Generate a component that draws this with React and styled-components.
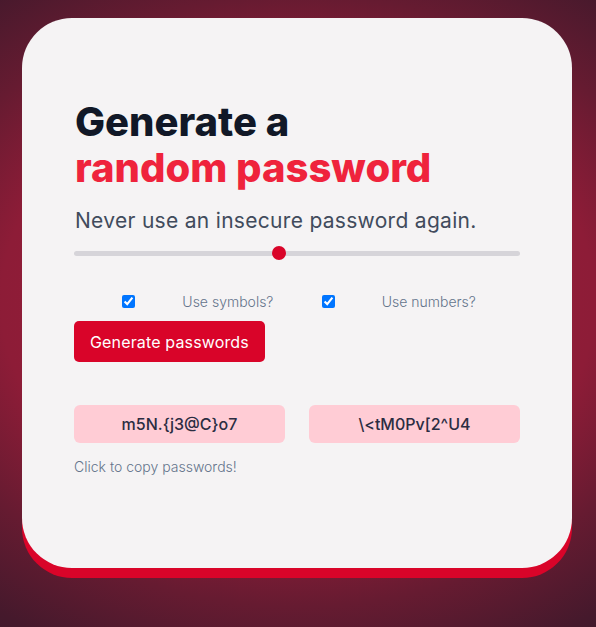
import React, { useState } from "react";
import styled, { createGlobalStyle } from "styled-components";

const Global = createGlobalStyle`
  html, body { margin: 0; padding: 0; }
  body {
    min-height: 100vh;
    font-family: Inter, "Noto Sans", sans-serif;
    background: radial-gradient(ellipse 560px 430px at 50% 48%, #a21d3b 0%, #8d1c37 53%, #661b31 71%, #45192c 90%, #3a1a2b 100%);
  }
`;

const Page = styled.div`
  display: flex;
  justify-content: center;
  padding: 18px 2px 0 0;
  min-height: 100vh;
  box-sizing: border-box;
`;

const Card = styled.main`
  width: 550px;
  height: 550px;
  box-sizing: border-box;
  background: #f5f3f4;
  border-radius: 50px;
  box-shadow: 0 10px 0 #d90429;
  padding: 81px 52px 0 52px;
`;

const Title = styled.h1`
  margin: 0;
  padding-left: 1px;
  font-size: 40px;
  line-height: 46px;
  font-weight: 800;
  letter-spacing: 0;
  color: #111827;
`;

const Accent = styled.span`
  display: block;
  color: #ef233c;
`;

const Subtitle = styled.p`
  margin: 16px 0 0;
  padding-left: 1px;
  font-size: 21px;
  line-height: 28px;
  font-weight: 400;
  letter-spacing: 0.3px;
  color: #414b5c;
`;

const Range = styled.input`
  display: block;
  width: 100%;
  height: 14px;
  margin: 11px 0 0;
  background: transparent;
  -webkit-appearance: none;
  appearance: none;
  &::-webkit-slider-runnable-track {
    height: 5px;
    background: #d6d4d9;
    border-radius: 3px;
  }
  &::-webkit-slider-thumb {
    -webkit-appearance: none;
    width: 14px;
    height: 14px;
    border-radius: 50%;
    background: #d90429;
    border: none;
    margin-top: -4.5px;
  }
`;

const Options = styled.div`
  display: flex;
  align-items: center;
  justify-content: space-evenly;
  margin-top: 32px;
`;

const Check = styled.input`
  margin: 3px 3px 3px 4px;
  width: 13px;
  height: 13px;
`;

const OptionLabel = styled.label`
  font-size: 14px;
  line-height: 17px;
  font-weight: 300;
  color: #64748b;
`;

const Button = styled.button`
  display: block;
  margin-top: 10px;
  height: 41px;
  padding: 0 16px;
  border: none;
  border-radius: 5px;
  background: #d90429;
  color: #fff;
  font-family: Inter, "Noto Sans", sans-serif;
  font-size: 16px;
  font-weight: 400;
  letter-spacing: 0.15px;
  cursor: pointer;
`;

const Passwords = styled.div`
  display: grid;
  grid-template-columns: 1fr 1fr;
  gap: 24px;
  margin-top: 43px;
`;

const PasswordBox = styled.button`
  height: 38px;
  border: none;
  border-radius: 6px;
  background: #ffccd5;
  color: #2b2d42;
  font-family: Inter, "Noto Sans", sans-serif;
  font-size: 16px;
  font-weight: 500;
  cursor: pointer;
`;

const Hint = styled.p`
  margin: 15px 0 0;
  font-size: 14px;
  line-height: 17px;
  font-weight: 300;
  color: #64748b;
`;

export default function App() {
  const [len, setLen] = useState(12);
  const [symbols, setSymbols] = useState(true);
  const [numbers, setNumbers] = useState(true);
  const passwords = ["m5N.{j3@C}o7", "\\<tM0Pv[2^U4"];
  return (
    <>
      <Global />
      <Page>
        <Card>
          <Title>
            Generate a<Accent>random password</Accent>
          </Title>
          <Subtitle>Never use an insecure password again.</Subtitle>
          <Range
            type="range"
            min={1}
            max={25}
            value={len}
            onChange={(e) => setLen(Number(e.target.value))}
          />
          <Options>
            <Check type="checkbox" id="sym" checked={symbols} onChange={() => setSymbols(!symbols)} />
            <OptionLabel htmlFor="sym">Use symbols?</OptionLabel>
            <Check type="checkbox" id="num" checked={numbers} onChange={() => setNumbers(!numbers)} />
            <OptionLabel htmlFor="num">Use numbers?</OptionLabel>
          </Options>
          <Button>Generate passwords</Button>
          <Passwords>
            {passwords.map((p) => (
              <PasswordBox key={p}>{p}</PasswordBox>
            ))}
          </Passwords>
          <Hint>Click to copy passwords!</Hint>
        </Card>
      </Page>
    </>
  );
}
